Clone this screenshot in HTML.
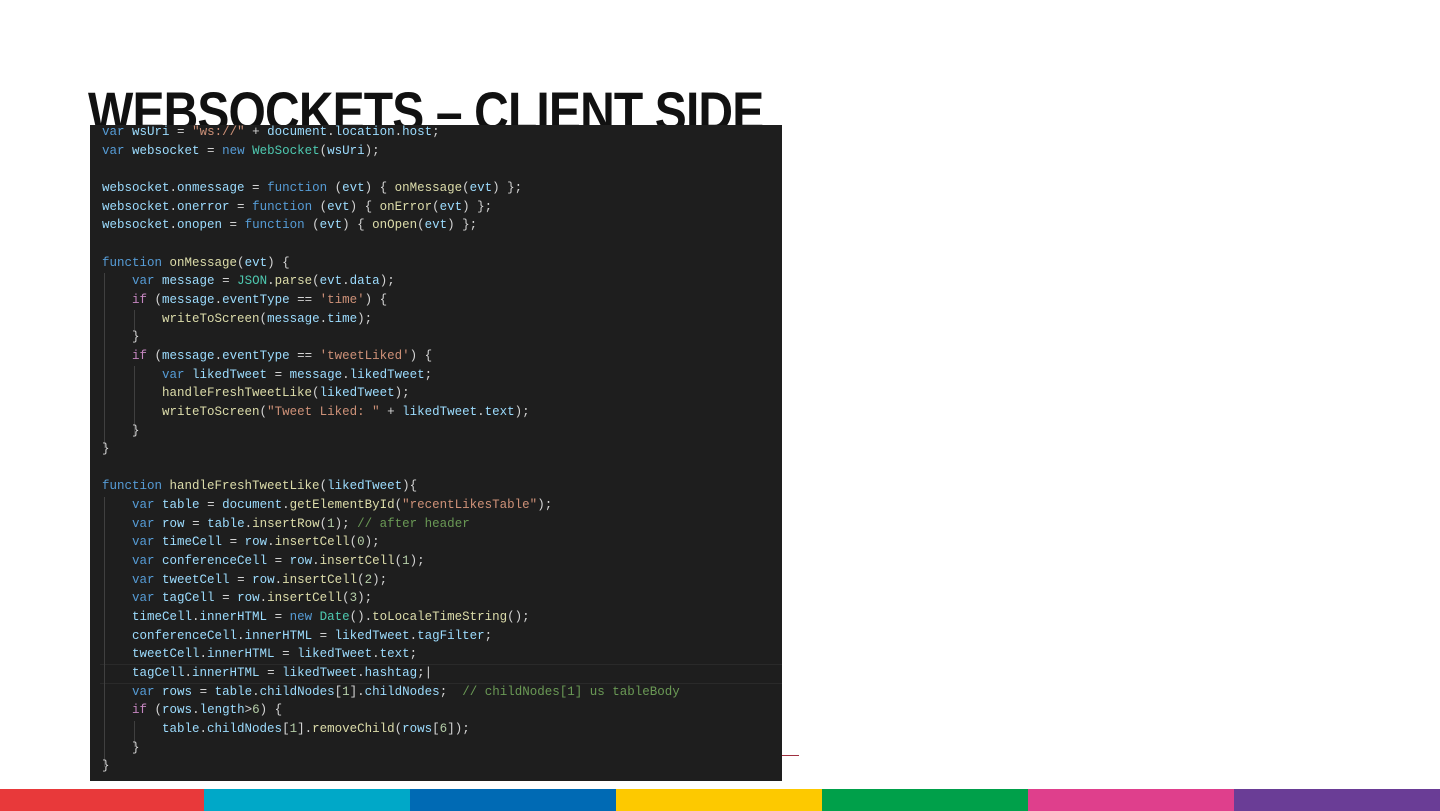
<!DOCTYPE html>
<html><head><meta charset="utf-8"><style>
body{margin:0;width:1440px;height:811px;background:#fff;position:relative;overflow:hidden;font-family:"Liberation Sans",sans-serif}
.t{position:absolute;left:88px;top:80px;font-weight:bold;font-size:56px;line-height:64px;color:#111;white-space:nowrap;transform-origin:0 0;transform:scaleX(0.857);letter-spacing:-1px}
.code{position:absolute;left:90px;top:125px;width:692px;height:656px;background:#1e1e1e;overflow:hidden}
pre{margin:0;position:absolute;left:12px;top:-2px;font-family:"Liberation Mono",monospace;font-size:12.5px;line-height:18.65px;color:#d4d4d4}
.k{color:#569cd6}.v{color:#9cdcfe}.f{color:#dcdcaa}.s{color:#ce9178}.c{color:#4ec9b0}.m{color:#6a9955}.n{color:#b5cea8}.p{color:#c586c0}
.hl{position:absolute;left:10px;right:0;top:539px;height:18px;border-top:1px solid #2a2a2a;border-bottom:1px solid #2a2a2a}
.g{position:absolute;width:1px;background:#404040}
.bar{position:absolute;top:789px;height:22px}
</style></head><body>
<div class="t">WEBSOCKETS – CLIENT SIDE</div>
<div class="code">
<div class="hl"></div>
<div class="g" style="left:14px;top:148px;height:175px"></div>
<div class="g" style="left:44px;top:185px;height:20px"></div>
<div class="g" style="left:44px;top:241px;height:70px"></div>
<div class="g" style="left:14px;top:372px;height:270px"></div>
<div class="g" style="left:44px;top:596px;height:26px"></div>
<pre><span class="k">var</span> <span class="v">wsUri</span> = <span class="s">"ws://"</span> + <span class="v">document</span>.<span class="v">location</span>.<span class="v">host</span>;
<span class="k">var</span> <span class="v">websocket</span> = <span class="k">new</span> <span class="c">WebSocket</span>(<span class="v">wsUri</span>);

<span class="v">websocket</span>.<span class="v">onmessage</span> = <span class="k">function</span> (<span class="v">evt</span>) { <span class="f">onMessage</span>(<span class="v">evt</span>) };
<span class="v">websocket</span>.<span class="v">onerror</span> = <span class="k">function</span> (<span class="v">evt</span>) { <span class="f">onError</span>(<span class="v">evt</span>) };
<span class="v">websocket</span>.<span class="v">onopen</span> = <span class="k">function</span> (<span class="v">evt</span>) { <span class="f">onOpen</span>(<span class="v">evt</span>) };

<span class="k">function</span> <span class="f">onMessage</span>(<span class="v">evt</span>) {
    <span class="k">var</span> <span class="v">message</span> = <span class="c">JSON</span>.<span class="f">parse</span>(<span class="v">evt</span>.<span class="v">data</span>);
    <span class="p">if</span> (<span class="v">message</span>.<span class="v">eventType</span> == <span class="s">'time'</span>) {
        <span class="f">writeToScreen</span>(<span class="v">message</span>.<span class="v">time</span>);
    }
    <span class="p">if</span> (<span class="v">message</span>.<span class="v">eventType</span> == <span class="s">'tweetLiked'</span>) {
        <span class="k">var</span> <span class="v">likedTweet</span> = <span class="v">message</span>.<span class="v">likedTweet</span>;
        <span class="f">handleFreshTweetLike</span>(<span class="v">likedTweet</span>);
        <span class="f">writeToScreen</span>(<span class="s">"Tweet Liked: "</span> + <span class="v">likedTweet</span>.<span class="v">text</span>);
    }
}

<span class="k">function</span> <span class="f">handleFreshTweetLike</span>(<span class="v">likedTweet</span>){
    <span class="k">var</span> <span class="v">table</span> = <span class="v">document</span>.<span class="f">getElementById</span>(<span class="s">"recentLikesTable"</span>);
    <span class="k">var</span> <span class="v">row</span> = <span class="v">table</span>.<span class="f">insertRow</span>(<span class="n">1</span>); <span class="m">// after header</span>
    <span class="k">var</span> <span class="v">timeCell</span> = <span class="v">row</span>.<span class="f">insertCell</span>(<span class="n">0</span>);
    <span class="k">var</span> <span class="v">conferenceCell</span> = <span class="v">row</span>.<span class="f">insertCell</span>(<span class="n">1</span>);
    <span class="k">var</span> <span class="v">tweetCell</span> = <span class="v">row</span>.<span class="f">insertCell</span>(<span class="n">2</span>);
    <span class="k">var</span> <span class="v">tagCell</span> = <span class="v">row</span>.<span class="f">insertCell</span>(<span class="n">3</span>);
    <span class="v">timeCell</span>.<span class="v">innerHTML</span> = <span class="k">new</span> <span class="c">Date</span>().<span class="f">toLocaleTimeString</span>();
    <span class="v">conferenceCell</span>.<span class="v">innerHTML</span> = <span class="v">likedTweet</span>.<span class="v">tagFilter</span>;
    <span class="v">tweetCell</span>.<span class="v">innerHTML</span> = <span class="v">likedTweet</span>.<span class="v">text</span>;
    <span class="v">tagCell</span>.<span class="v">innerHTML</span> = <span class="v">likedTweet</span>.<span class="v">hashtag</span>;|
    <span class="k">var</span> <span class="v">rows</span> = <span class="v">table</span>.<span class="v">childNodes</span>[<span class="n">1</span>].<span class="v">childNodes</span>;  <span class="m">// childNodes[1] us tableBody</span>
    <span class="p">if</span> (<span class="v">rows</span>.<span class="v">length</span>&gt;<span class="n">6</span>) {
        <span class="v">table</span>.<span class="v">childNodes</span>[<span class="n">1</span>].<span class="f">removeChild</span>(<span class="v">rows</span>[<span class="n">6</span>]);
    }
}</pre>
</div>
<div style="position:absolute;left:782px;top:755px;width:17px;height:1px;background:#a03040"></div>
<div class="bar" style="left:0;width:204px;background:#e8393a"></div>
<div class="bar" style="left:204px;width:206px;background:#00a8c8"></div>
<div class="bar" style="left:410px;width:206px;background:#006ab4"></div>
<div class="bar" style="left:616px;width:206px;background:#fdc900"></div>
<div class="bar" style="left:822px;width:206px;background:#00a04a"></div>
<div class="bar" style="left:1028px;width:206px;background:#df3f8c"></div>
<div class="bar" style="left:1234px;width:206px;background:#6a3d96"></div>
</body></html>
